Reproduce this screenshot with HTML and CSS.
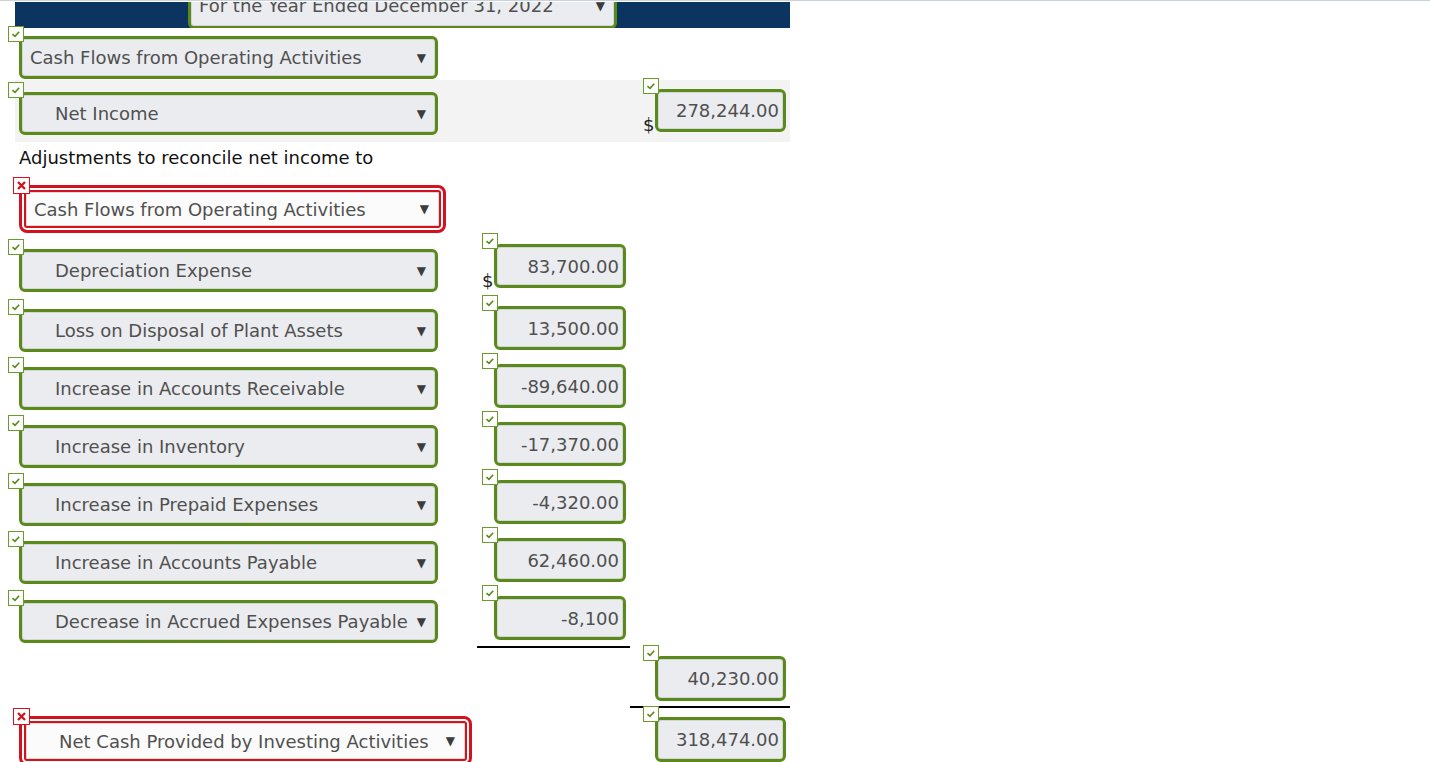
FILE: index.html
```html
<!DOCTYPE html>
<html>
<head>
<meta charset="utf-8">
<link rel="stylesheet" href="styles.css">
</head>
<body>
<div class="topline"></div>
<div class="sheet">
  <div class="hdr">
    <div class="sel sel-hdr"><span class="lbl">For the Year Ended December 31, 2022</span><span class="arr">▼</span></div>
  </div>

  <div class="row row-a">
    <div class="c-left">
      <div class="fld">
        <span class="ok"><svg viewBox="0 0 16 16" width="16" height="16"><path d="M4.5 8.2 L7 10.4 L11.2 5.8" fill="none" stroke="#5a8a1a" stroke-width="1.6"/></svg></span>
        <div class="sel w419"><span class="lbl">Cash Flows from Operating Activities</span><span class="arr">▼</span></div>
      </div>
    </div>
  </div>

  <div class="row row-b band">
    <div class="c-left">
      <div class="fld">
        <span class="ok"><svg viewBox="0 0 16 16" width="16" height="16"><path d="M4.5 8.2 L7 10.4 L11.2 5.8" fill="none" stroke="#5a8a1a" stroke-width="1.6"/></svg></span>
        <div class="sel w419 ind"><span class="lbl">Net Income</span><span class="arr">▼</span></div>
      </div>
    </div>
    <div></div>
    <div class="c-right money">
      <span class="cur">$</span>
      <div class="fld">
        <span class="ok ok-num"><svg viewBox="0 0 16 16" width="16" height="16"><path d="M4.5 8.2 L7 10.4 L11.2 5.8" fill="none" stroke="#5a8a1a" stroke-width="1.6"/></svg></span>
        <div class="num">278,244.00</div>
      </div>
    </div>
  </div>

  <div class="adj">Adjustments to reconcile net income to</div>

  <div class="row row-c">
    <div class="c-left">
      <div class="fld">
        <span class="bad-ic"><svg viewBox="0 0 17 17" width="17" height="17"><path d="M5 5 L12 12 M12 5 L5 12" stroke="#d3121d" stroke-width="2.3" fill="none"/></svg></span>
        <div class="bad w427"><div class="sel-bad"><span class="lbl">Cash Flows from Operating Activities</span><span class="arr">▼</span></div></div>
      </div>
    </div>
  </div>

  <div class="row item row-d">
    <div class="c-left">
      <div class="fld">
        <span class="ok"><svg viewBox="0 0 16 16" width="16" height="16"><path d="M4.5 8.2 L7 10.4 L11.2 5.8" fill="none" stroke="#5a8a1a" stroke-width="1.6"/></svg></span>
        <div class="sel w419 ind"><span class="lbl">Depreciation Expense</span><span class="arr">▼</span></div>
      </div>
    </div>
    <div class="c-mid money">
      <span class="cur">$</span>
      <div class="fld">
        <span class="ok ok-num"><svg viewBox="0 0 16 16" width="16" height="16"><path d="M4.5 8.2 L7 10.4 L11.2 5.8" fill="none" stroke="#5a8a1a" stroke-width="1.6"/></svg></span>
        <div class="num nm">83,700.00</div>
      </div>
    </div>
  </div>

  <div class="row item">
    <div class="c-left">
      <div class="fld">
        <span class="ok"><svg viewBox="0 0 16 16" width="16" height="16"><path d="M4.5 8.2 L7 10.4 L11.2 5.8" fill="none" stroke="#5a8a1a" stroke-width="1.6"/></svg></span>
        <div class="sel w419 ind"><span class="lbl">Loss on Disposal of Plant Assets</span><span class="arr">▼</span></div>
      </div>
    </div>
    <div class="c-mid money">
      <span class="cur"></span>
      <div class="fld">
        <span class="ok ok-num"><svg viewBox="0 0 16 16" width="16" height="16"><path d="M4.5 8.2 L7 10.4 L11.2 5.8" fill="none" stroke="#5a8a1a" stroke-width="1.6"/></svg></span>
        <div class="num nm">13,500.00</div>
      </div>
    </div>
  </div>

  <div class="row item">
    <div class="c-left">
      <div class="fld">
        <span class="ok"><svg viewBox="0 0 16 16" width="16" height="16"><path d="M4.5 8.2 L7 10.4 L11.2 5.8" fill="none" stroke="#5a8a1a" stroke-width="1.6"/></svg></span>
        <div class="sel w419 ind"><span class="lbl">Increase in Accounts Receivable</span><span class="arr">▼</span></div>
      </div>
    </div>
    <div class="c-mid money">
      <span class="cur"></span>
      <div class="fld">
        <span class="ok ok-num"><svg viewBox="0 0 16 16" width="16" height="16"><path d="M4.5 8.2 L7 10.4 L11.2 5.8" fill="none" stroke="#5a8a1a" stroke-width="1.6"/></svg></span>
        <div class="num nm">-89,640.00</div>
      </div>
    </div>
  </div>

  <div class="row item">
    <div class="c-left">
      <div class="fld">
        <span class="ok"><svg viewBox="0 0 16 16" width="16" height="16"><path d="M4.5 8.2 L7 10.4 L11.2 5.8" fill="none" stroke="#5a8a1a" stroke-width="1.6"/></svg></span>
        <div class="sel w419 ind"><span class="lbl">Increase in Inventory</span><span class="arr">▼</span></div>
      </div>
    </div>
    <div class="c-mid money">
      <span class="cur"></span>
      <div class="fld">
        <span class="ok ok-num"><svg viewBox="0 0 16 16" width="16" height="16"><path d="M4.5 8.2 L7 10.4 L11.2 5.8" fill="none" stroke="#5a8a1a" stroke-width="1.6"/></svg></span>
        <div class="num nm">-17,370.00</div>
      </div>
    </div>
  </div>

  <div class="row item">
    <div class="c-left">
      <div class="fld">
        <span class="ok"><svg viewBox="0 0 16 16" width="16" height="16"><path d="M4.5 8.2 L7 10.4 L11.2 5.8" fill="none" stroke="#5a8a1a" stroke-width="1.6"/></svg></span>
        <div class="sel w419 ind"><span class="lbl">Increase in Prepaid Expenses</span><span class="arr">▼</span></div>
      </div>
    </div>
    <div class="c-mid money">
      <span class="cur"></span>
      <div class="fld">
        <span class="ok ok-num"><svg viewBox="0 0 16 16" width="16" height="16"><path d="M4.5 8.2 L7 10.4 L11.2 5.8" fill="none" stroke="#5a8a1a" stroke-width="1.6"/></svg></span>
        <div class="num nm">-4,320.00</div>
      </div>
    </div>
  </div>

  <div class="row item">
    <div class="c-left">
      <div class="fld">
        <span class="ok"><svg viewBox="0 0 16 16" width="16" height="16"><path d="M4.5 8.2 L7 10.4 L11.2 5.8" fill="none" stroke="#5a8a1a" stroke-width="1.6"/></svg></span>
        <div class="sel w419 ind"><span class="lbl">Increase in Accounts Payable</span><span class="arr">▼</span></div>
      </div>
    </div>
    <div class="c-mid money">
      <span class="cur"></span>
      <div class="fld">
        <span class="ok ok-num"><svg viewBox="0 0 16 16" width="16" height="16"><path d="M4.5 8.2 L7 10.4 L11.2 5.8" fill="none" stroke="#5a8a1a" stroke-width="1.6"/></svg></span>
        <div class="num nm">62,460.00</div>
      </div>
    </div>
  </div>

  <div class="row item row-j">
    <div class="c-left">
      <div class="fld">
        <span class="ok"><svg viewBox="0 0 16 16" width="16" height="16"><path d="M4.5 8.2 L7 10.4 L11.2 5.8" fill="none" stroke="#5a8a1a" stroke-width="1.6"/></svg></span>
        <div class="sel w419 ind"><span class="lbl">Decrease in Accrued Expenses Payable</span><span class="arr">▼</span></div>
      </div>
    </div>
    <div class="c-mid money">
      <span class="cur"></span>
      <div class="fld">
        <span class="ok ok-num"><svg viewBox="0 0 16 16" width="16" height="16"><path d="M4.5 8.2 L7 10.4 L11.2 5.8" fill="none" stroke="#5a8a1a" stroke-width="1.6"/></svg></span>
        <div class="num nm">-8,100</div>
      </div>
    </div>
  </div>

  <div class="row rule"><div></div><div class="line"></div><div></div></div>

  <div class="row row-k">
    <div></div><div></div>
    <div class="c-right money">
      <span class="cur"></span>
      <div class="fld">
        <span class="ok ok-num"><svg viewBox="0 0 16 16" width="16" height="16"><path d="M4.5 8.2 L7 10.4 L11.2 5.8" fill="none" stroke="#5a8a1a" stroke-width="1.6"/></svg></span>
        <div class="num tall">40,230.00</div>
      </div>
    </div>
  </div>

  <div class="row rule"><div></div><div></div><div class="line"></div></div>

  <div class="row row-l">
    <div class="c-left">
      <div class="fld">
        <span class="bad-ic"><svg viewBox="0 0 17 17" width="17" height="17"><path d="M5 5 L12 12 M12 5 L5 12" stroke="#d3121d" stroke-width="2.3" fill="none"/></svg></span>
        <div class="bad w453"><div class="sel-bad ind-bad"><span class="lbl">Net Cash Provided by Investing Activities</span><span class="arr">▼</span></div></div>
      </div>
    </div>
    <div></div>
    <div class="c-right money">
      <span class="cur"></span>
      <div class="fld">
        <span class="ok ok-num"><svg viewBox="0 0 16 16" width="16" height="16"><path d="M4.5 8.2 L7 10.4 L11.2 5.8" fill="none" stroke="#5a8a1a" stroke-width="1.6"/></svg></span>
        <div class="num tall">318,474.00</div>
      </div>
    </div>
  </div>
</div>
</body>
</html>
```

FILE: styles.css
```css
html, body {
  margin: 0;
  padding: 0;
  background: #ffffff;
  font-family: "DejaVu Sans", Verdana, sans-serif;
  font-size: 18px;
  color: #000;
  overflow: hidden;
}

.topline {
  height: 1px;
  background: #c9d3de;
  margin-bottom: 1px;
}

.sheet {
  margin-left: 15px;
  width: 775px;
}

.hdr {
  height: 26px;
  background: #0b3461;
  overflow: hidden;
  padding-left: 173px;
}

.sel {
  box-sizing: border-box;
  display: flex;
  align-items: center;
  justify-content: space-between;
  height: 42px;
  border: 3px solid #5a8a1a;
  border-radius: 6px;
  background: #ebecef;
  box-shadow: inset 0 0 0 1px #d2d6da;
  padding: 0 9px 0 8px;
  color: #505050;
  white-space: nowrap;
}

.sel-hdr {
  width: 429px;
  height: 44px;
  margin-top: -17px;
  padding-bottom: 3px;
}

.sel.ind { padding-left: 33px; }

.w419 { width: 419px; height: 43px; }

.arr {
  font-size: 12px;
  color: #3c3c3c;
  line-height: 1;
}

.row {
  display: grid;
  grid-template-columns: 462px 153px 160px;
}

.c-left { padding-left: 4px; }

.fld { position: relative; }

.ok {
  position: absolute;
  left: -11px;
  top: -10px;
  width: 16px;
  height: 16px;
  box-sizing: border-box;
  border: 1px solid #6c9a2e;
  background: #fff;
  z-index: 2;
  display: block;
}
.ok svg { position: absolute; left: -1px; top: -1px; }

.ok-num { left: -12px; top: -11px; }

.bad-ic {
  position: absolute;
  left: -6px;
  top: -8px;
  width: 17px;
  height: 17px;
  box-sizing: border-box;
  border: 1px solid #d3121d;
  background: #fff;
  z-index: 2;
  display: block;
}
.bad-ic svg { position: absolute; left: -1px; top: -1px; }

.bad {
  box-sizing: border-box;
  border: 3px solid #d3121d;
  border-radius: 8px;
  padding: 2px;
  background: #fff;
}
.w427 { width: 427px; height: 48px; }
.w453 { width: 453px; height: 50px; }

.sel-bad {
  box-sizing: border-box;
  height: 100%;
  display: flex;
  align-items: center;
  justify-content: space-between;
  border: 2px solid #d3121d;
  border-radius: 3px;
  background: #fbfbfb;
  box-shadow: inset 0 0 0 1px #d8d8d8;
  padding: 0 10px 0 8px;
  color: #505050;
  white-space: nowrap;
}
.sel-bad.ind-bad { padding-left: 33px; }

.money {
  display: flex;
  align-items: flex-end;
}

.c-mid { padding-left: 5px; }
.c-right { padding-left: 13px; }

.cur {
  width: 12px;
  flex: none;
  line-height: 18px;
  margin-bottom: -1px;
  color: #222;
}

.num {
  box-sizing: border-box;
  width: 131px;
  height: 43px;
  border: 3px solid #5a8a1a;
  border-radius: 6px;
  background: #ebecef;
  box-shadow: inset 0 0 0 1px #d2d6da;
  display: flex;
  align-items: center;
  justify-content: flex-end;
  padding-right: 4px;
  color: #505050;
  white-space: nowrap;
}
.num.nm { width: 132px; height: 44px; }
.num.tall { height: 45px; }

/* row sizes */
.row-a { height: 52px; }
.row-a .c-left { padding-top: 8px; }

.band { background: #f3f3f4; }
.row-b { height: 62px; }
.row-b .c-left { padding-top: 12px; }
.row-b .c-right { padding-top: 9px; align-items: flex-start; }
.row-b .c-right .cur { align-self: flex-end; margin-bottom: 8px; }

.adj {
  height: 34px;
  box-sizing: border-box;
  padding: 5px 0 0 4px;
  line-height: 22px;
  color: #111;
}

.row-c { height: 68px; }
.row-c .c-left { padding-top: 9px; }

.item { height: 58px; }
.item .c-left { padding-top: 3px; }
.item .c-mid { align-items: flex-start; }
.item .c-mid .cur { align-self: flex-end; margin-bottom: 12px; }

.row-d { height: 62px; }
.row-d .c-left { padding-top: 5px; }
.row-d .c-mid .cur { margin-bottom: 16px; }

.row-j { height: 50px; }
.row-j .c-left { padding-top: 4px; }

.rule { height: 2px; }
.line { background: #000; height: 2px; }

.row-k { height: 58px; }
.row-k .c-right { padding-top: 8px; align-items: flex-start; }

.row-l { height: 60px; }
.row-l .c-left { padding-top: 8px; }
.row-l .c-right { padding-top: 9px; align-items: flex-start; }
```
